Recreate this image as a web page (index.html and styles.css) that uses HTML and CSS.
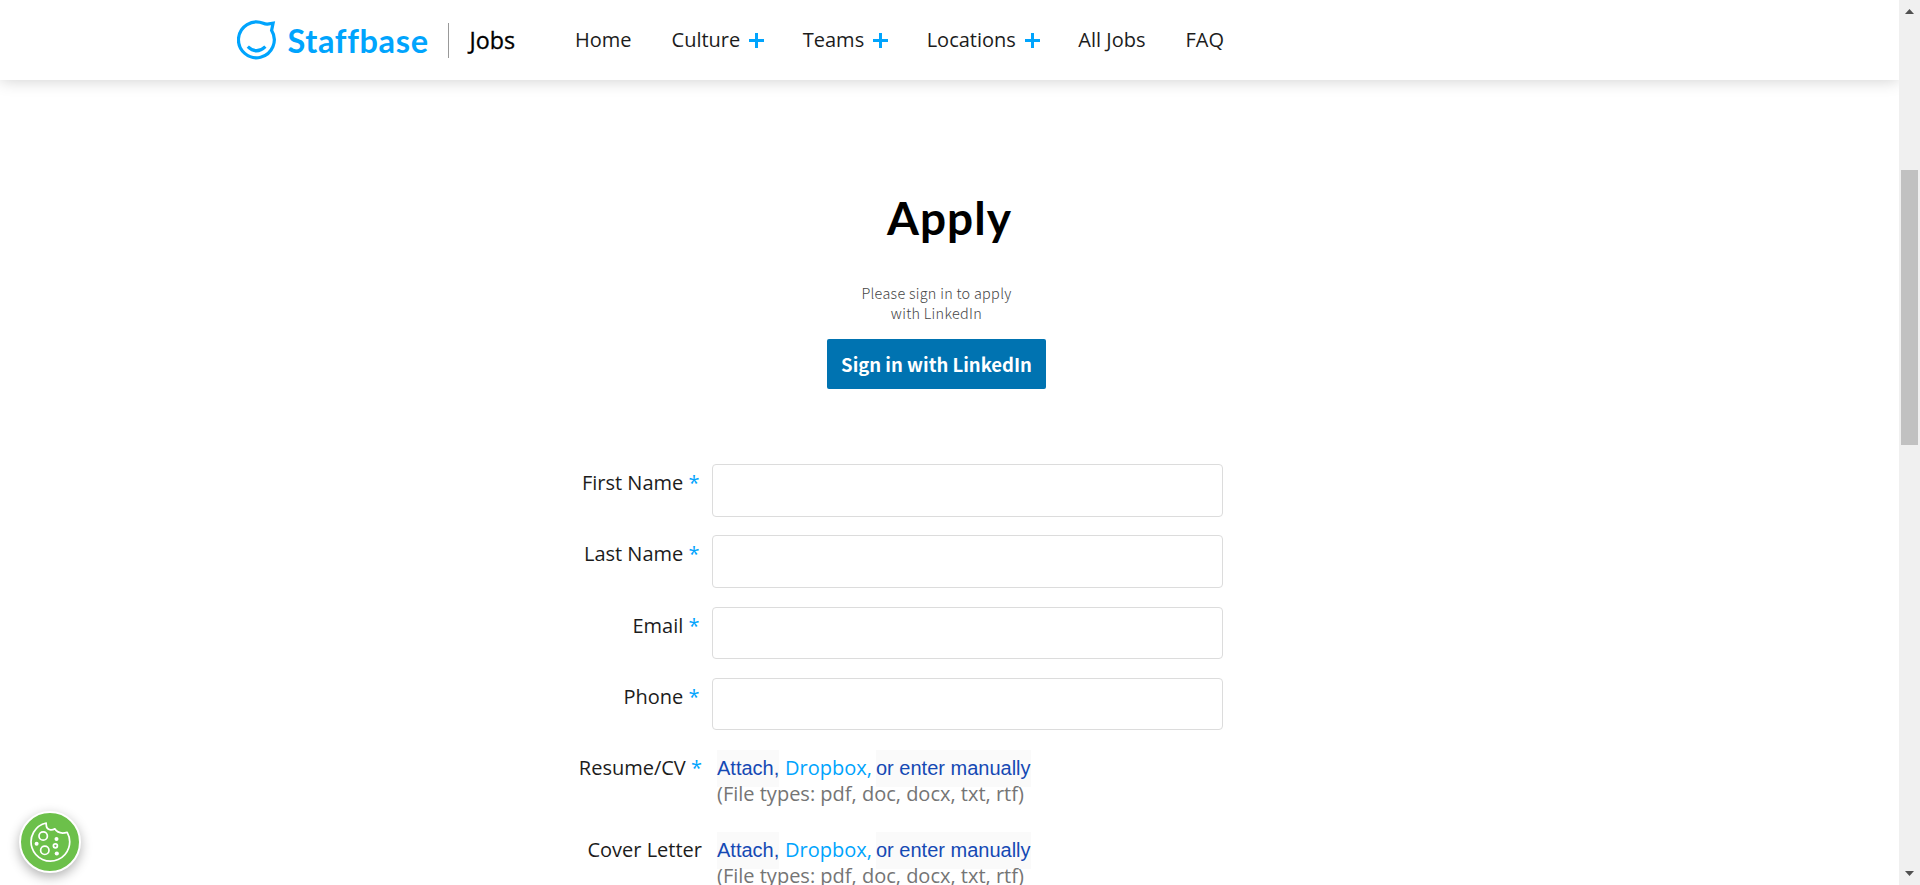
FILE: index.html
```html
<!DOCTYPE html>
<html lang="en">
<head>
<meta charset="utf-8">
<title>Apply - Staffbase Jobs</title>
<link rel="stylesheet" href="styles.css">
</head>
<body>
<div class="viewport">
  <div class="page">
    <header class="header">
      <a class="brand">
        <svg class="brand-mark" width="40" height="42" viewBox="0 0 40 42" fill="none" stroke="#00a4fd">
          <path d="M26.3 4.3A17.9 17.9 0 1 0 34.6 11.4L36.1 4.2L30.5 5.1Q28.2 5.2 26.3 4.3Z" stroke-width="3.2"/>
          <path d="M10.8 27.6Q19.6 36 28.4 27.6" stroke-width="3.2"/>
        </svg>
        <span class="brand-name">Staffbase</span>
      </a>
      <span class="brand-section">Jobs</span>
      <nav class="nav">
        <a class="nav-item">Home</a>
        <a class="nav-item">Culture<i class="plus"></i></a>
        <a class="nav-item">Teams<i class="plus"></i></a>
        <a class="nav-item">Locations<i class="plus"></i></a>
        <a class="nav-item">All Jobs</a>
        <a class="nav-item">FAQ</a>
      </nav>
    </header>
    <main class="main">
      <h1 class="title">Apply</h1>
      <div class="linkedin">
        <p class="linkedin-text">Please sign in to apply<br>with LinkedIn</p>
        <button class="linkedin-button">Sign in with LinkedIn</button>
      </div>
      <form class="form">
        <div class="row"><label class="label">First Name <b class="req">*</b></label><input class="input"></div>
        <div class="row"><label class="label">Last Name <b class="req">*</b></label><input class="input"></div>
        <div class="row"><label class="label">Email <b class="req">*</b></label><input class="input"></div>
        <div class="row"><label class="label">Phone <b class="req">*</b></label><input class="input"></div>
        <div class="row row-file">
          <span class="label">Resume/CV <b class="req">*</b></span>
          <div class="file">
            <div class="sources"><a class="attach">Attach,</a><a class="dropbox">Dropbox,</a><a class="attach manual">or enter manually</a></div>
            <div class="types">(File types: pdf, doc, docx, txt, rtf)</div>
          </div>
        </div>
        <div class="row row-file">
          <span class="label">Cover Letter</span>
          <div class="file">
            <div class="sources"><a class="attach">Attach,</a><a class="dropbox">Dropbox,</a><a class="attach manual">or enter manually</a></div>
            <div class="types">(File types: pdf, doc, docx, txt, rtf)</div>
          </div>
        </div>
      </form>
    </main>
    <button class="cookie" aria-label="Cookie settings">
      <svg width="42" height="42" viewBox="0 0 42 42" fill="none" stroke="#fff" stroke-width="1.7">
        <path d="M17.2 2C17 5.5 18.5 8.5 21.5 8.8Q24 9 25.8 7.8C28 11.5 32 13 38.2 11.4A19.3 19.3 0 1 1 17.2 2Z" stroke-linejoin="round"/>
        <circle cx="14.2" cy="15" r="4.2"/>
        <circle cx="15.8" cy="29.3" r="4.2"/>
        <circle cx="26.4" cy="24.8" r="2"/>
        <g fill="#fff" stroke="none"><circle cx="7.6" cy="22.7" r="2"/><circle cx="27.5" cy="17.9" r="2"/><circle cx="27.8" cy="32.5" r="2.1"/></g>
      </svg>
    </button>
  </div>
  <div class="scrollbar">
    <svg width="9" height="5" viewBox="0 0 9 5"><path d="M0 5L4.5 0L9 5Z" fill="#505050"/></svg>
    <div class="thumb"></div>
    <svg class="down" width="9" height="5" viewBox="0 0 9 5"><path d="M0 0L4.5 5L9 0Z" fill="#505050"/></svg>
  </div>
</div>
</body>
</html>
```
FILE: styles.css
```css
* { box-sizing: border-box; }
body { margin: 0; overflow: hidden; background: #fff; color: #1c1c1c; font: 20px/26px "Open Sans", sans-serif; }
.viewport { display: flex; height: 885px; overflow: hidden; }
.page { position: relative; width: 1899px; height: 885px; overflow: hidden; }
.header { display: flex; align-items: center; height: 80px; padding-left: 237px; box-shadow: 0 0 16px rgba(0, 0, 0, .2); }
.brand { display: flex; align-items: center; width: 212px; height: 35px; border-right: 1px solid #999; color: #00a4fd; }
.brand-mark { flex: none; }
.brand-name { margin: 1px 0 0 10.5px; font: 700 32.5px/40px Lato, sans-serif; letter-spacing: .65px; font-variant-ligatures: none; }
.brand-section { width: 106px; padding-left: 20.5px; color: #000; font-size: 23.3px; font-weight: 500; -webkit-text-stroke: .3px #000; }
.nav { display: flex; gap: 40px; margin-left: 20px; }
.nav-item { display: flex; align-items: center; font-weight: 400; white-space: nowrap; }
.plus { width: 15px; height: 15px; margin: 0 -1.5px 0 9px; background: linear-gradient(#00a4fd, #00a4fd) center / 100% 3px no-repeat, linear-gradient(#00a4fd, #00a4fd) center / 3px 100% no-repeat; }
.main { display: flex; flex-direction: column; align-items: center; padding-top: 111px; }
.title { margin: 0; color: #000; font: 700 46px/54px Lato, sans-serif; letter-spacing: 1px; }
.linkedin { display: flex; flex-direction: column; align-items: center; gap: 16px; margin: 38px 26px 0 0; font-family: "Noto Sans CJK SC", sans-serif; }
.linkedin-text { margin: 0; color: #444; font-size: 14.4px; font-weight: 300; line-height: 20px; letter-spacing: .3px; text-align: center; }
.linkedin-button { width: 219px; height: 50px; padding: 0; border: 0; border-radius: 2px; background: #0073b1; color: #fff; font: 700 18.5px/24px "Noto Sans CJK SC", sans-serif; white-space: nowrap; }
.form { display: flex; flex-direction: column; width: 649px; margin: 75px 102px 0 0; }
.row { display: flex; gap: 12.5px; height: 71.3px; }
.label { width: 125.5px; padding-top: 6px; text-align: right; white-space: nowrap; }
.req { color: #00a4fd; font-weight: 500; }
.input { width: 511px; height: 52.6px; border: 1px solid #dcdcdc; border-radius: 4px; background: #fff; }
.row-file { gap: 15px; height: 82px; }
.row-file .label { width: 128px; }
.file { padding-top: 6px; white-space: nowrap; }
.sources { display: flex; align-items: center; height: 26px; color: #00a4fd; }
.attach { flex: none; height: 37px; width: 62px; background: #fafafa; color: #1549b4; font: 20px/37px "Liberation Sans", Arial, sans-serif; }
.manual { width: 155px; }
.dropbox { width: 97px; padding-left: 6px; }
.types { position: relative; color: #757575; }
.cookie { position: absolute; left: 19px; top: 811px; display: flex; align-items: center; justify-content: center; width: 62px; height: 62px; padding: 0; border: 2px solid #fff; border-radius: 50%; background: #6cc04a; box-shadow: 0 4px 12px rgba(0, 0, 0, .3); }
.scrollbar { display: flex; flex-direction: column; align-items: center; width: 21px; height: 885px; padding: 9px 0; background: #f0f0f0; }
.thumb { width: 17px; height: 275px; margin-top: 156px; background: #c1c1c1; }
.down { margin-top: auto; }
```
